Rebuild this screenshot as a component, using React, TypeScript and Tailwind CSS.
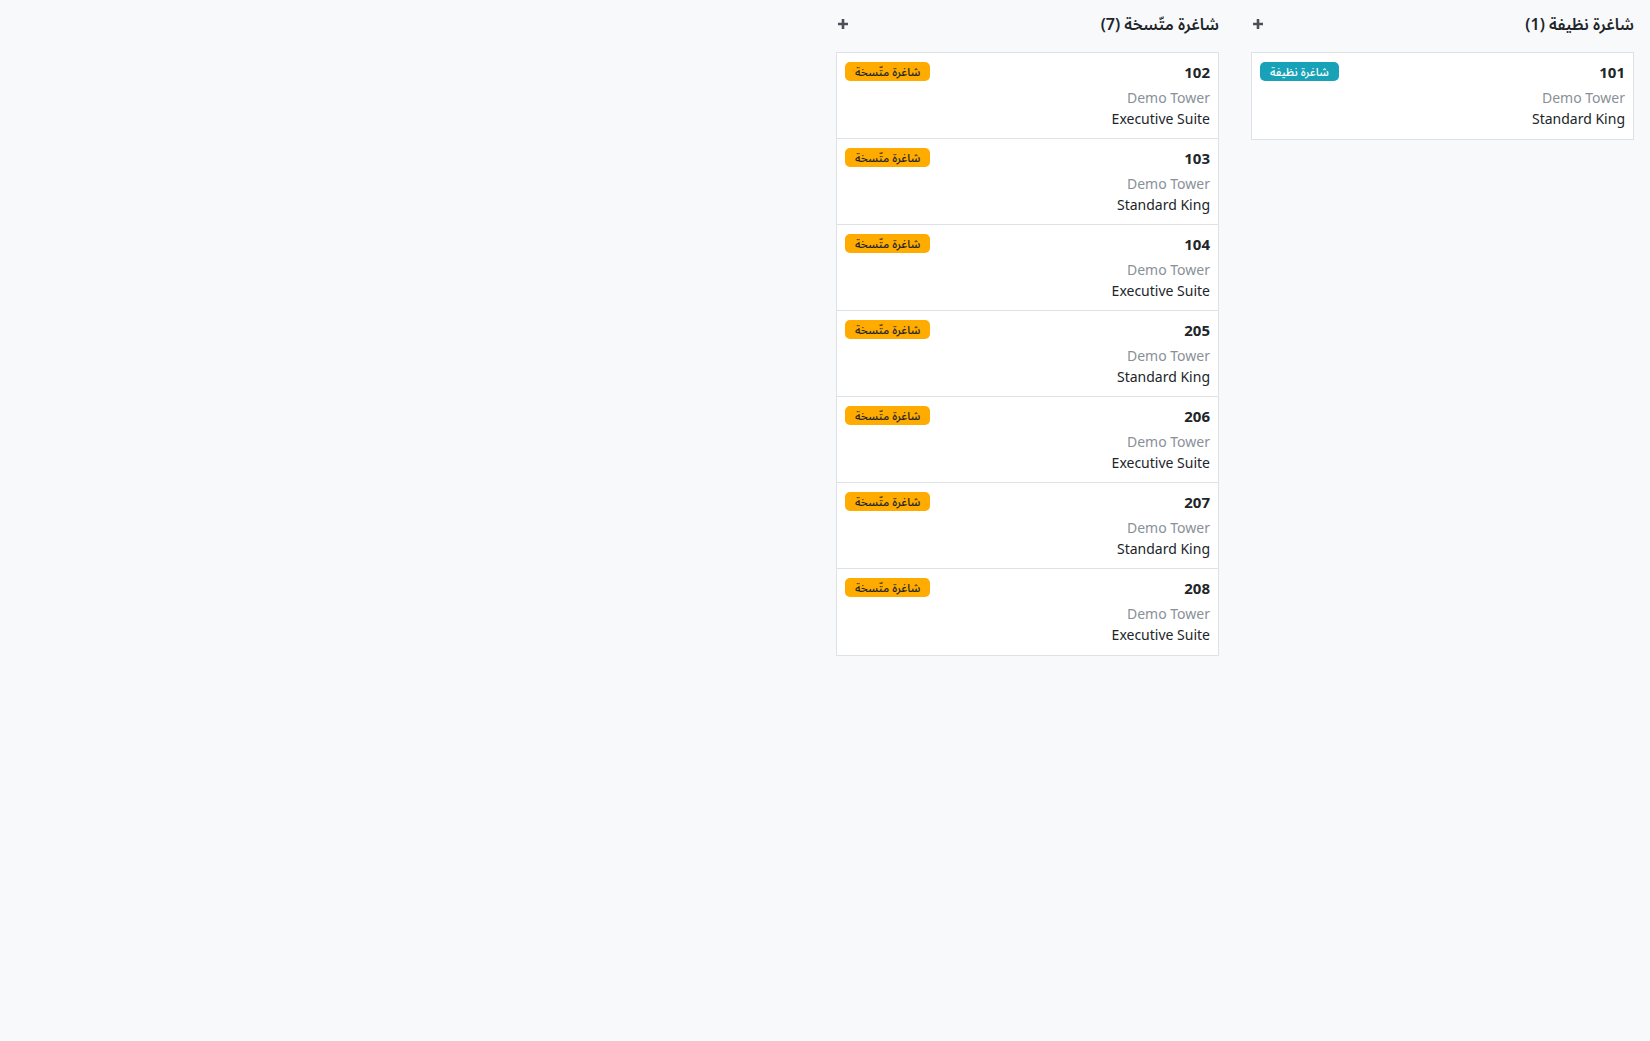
import React from "react";

type Room = { num: string; type: string };

const clean: Room[] = [{ num: "101", type: "Standard King" }];
const dirty: Room[] = [
  { num: "102", type: "Executive Suite" },
  { num: "103", type: "Standard King" },
  { num: "104", type: "Executive Suite" },
  { num: "205", type: "Standard King" },
  { num: "206", type: "Executive Suite" },
  { num: "207", type: "Standard King" },
  { num: "208", type: "Executive Suite" },
];

function Plus() {
  return (
    <svg width="12" height="12" viewBox="0 0 12 12" className="text-[#495057]">
      <path d="M6 1v10M1 6h10" stroke="currentColor" strokeWidth="2.6" strokeLinecap="butt" />
    </svg>
  );
}

function Card({ room, badge, badgeClass, last }: { room: Room; badge: string; badgeClass: string; last: boolean }) {
  return (
    <div className={"h-[86px] px-2 pt-2 bg-white " + (last ? "" : "border-b border-[#dee2e6]")}>
      <div className="flex items-start justify-between h-[26px]">
        <div className="text-[15px] font-bold text-[#212529] leading-[20px] mt-[1px]">{room.num}</div>
        <span className={"mt-[1px] h-[19px] px-[10px] rounded-[5px] text-[11.5px] leading-[19px] font-medium " + badgeClass}>
          {badge}
        </span>
      </div>
      <div className="text-[14px] leading-[21px] text-[#8a9097]">Demo Tower</div>
      <div className="text-[14px] leading-[21px] text-[#212529]">{room.type}</div>
    </div>
  );
}

function Column({ title, rooms, badge, badgeClass }: { title: string; rooms: Room[]; badge: string; badgeClass: string }) {
  return (
    <div className="w-[383px] flex flex-col">
      <div className="h-6 flex items-center justify-between mb-4">
        <div className="text-[16px] font-semibold text-[#212529]">{title}</div>
        <button className="w-4 h-4 flex items-center justify-center ml-[-1px]">
          <Plus />
        </button>
      </div>
      <div className="border border-[#dee2e6] bg-white">
        {rooms.map((r, i) => (
          <Card key={r.num} room={r} badge={badge} badgeClass={badgeClass} last={i === rooms.length - 1} />
        ))}
      </div>
    </div>
  );
}

export default function App() {
  return (
    <div
      dir="rtl"
      className="min-h-[1041px] w-full bg-[#f8f9fa] pt-3 px-4"
      style={{ fontFamily: '"Noto Sans", "Noto Sans Arabic", "DejaVu Sans", sans-serif' }}
    >
      <div className="flex items-start gap-8">
        <Column title="شاغرة نظيفة (1)" rooms={clean} badge="شاغرة نظيفة" badgeClass="bg-[#17a2b8] text-white" />
        <Column title="شاغرة متّسخة (7)" rooms={dirty} badge="شاغرة متّسخة" badgeClass="bg-[#ffab00] text-[#212529]" />
      </div>
    </div>
  );
}
